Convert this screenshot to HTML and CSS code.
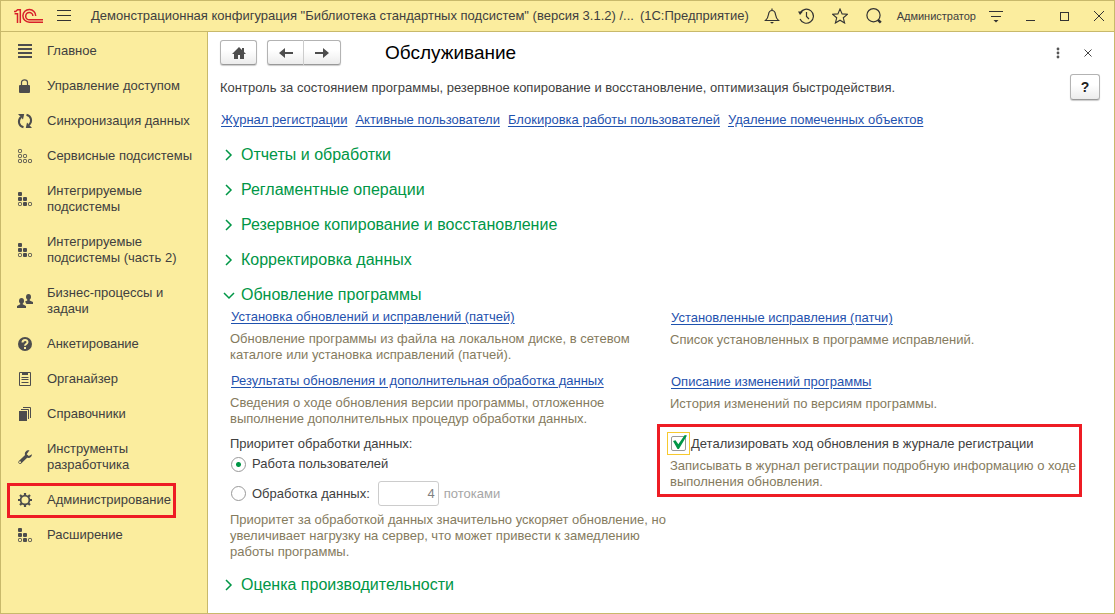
FILE: index.html
```html
<!DOCTYPE html>
<html lang="ru">
<head>
<meta charset="utf-8">
<title>Обслуживание</title>
<link rel="stylesheet" href="styles.css">
</head>
<body>
<svg class="sprite" aria-hidden="true">
  <symbol id="blocks" viewBox="0 0 16 16">
    <g fill="currentColor"><rect x="1" y="1" width="4" height="4" rx="1"/><rect x="1" y="6" width="4" height="4" rx="1"/><rect x="6" y="6" width="4" height="4" rx="1"/><rect x="6" y="11" width="4" height="4" rx="1"/></g>
    <g fill="none" stroke="currentColor"><rect x="1.5" y="11.5" width="3" height="3" rx=".8"/><rect x="11.5" y="11.5" width="3" height="3" rx=".8"/></g>
  </symbol>
</svg>
<div class="window">
  <header class="titlebar">
    <svg class="logo" viewBox="0 0 30 16" fill="none" stroke="#d8202a" stroke-width="1.5">
      <path d="M0 3.6H1.6L3.6 1.8H6.3V15M.6 5.800H3.500V15"/>
      <path d="M21.700 8A6.400 6.400 0 1 0 15.300 14.200H29"/>
      <path d="M18.900 8A3.600 3.600 0 1 0 15.300 11.700H29"/>
    </svg>
    <button class="bare" aria-label="Меню"><svg width="14" height="12" viewBox="0 0 14 12" fill="none" stroke="#333"><path d="M0 .5h14M0 5.5h14M0 10.5h14"/></svg></button>
    <div class="caption"><span class="config">Демонстрационная конфигурация "Библиотека стандартных подсистем" (версия 3.1.2) /...</span><span>(1С:Предприятие)</span></div>
    <div class="tools">
      <button class="bare" aria-label="Уведомления"><svg width="16" height="16" viewBox="0 0 16 16" fill="none" stroke="#333" stroke-width="1.2"><path d="M8 .5v2M1.500 12.500h13c-2-1.500-2.500-3-3-6C11.200 4 10 2.500 8 2.500S4.800 4 4.500 6.500c-.5 3-1 4.500-3 6z"/><path d="M6 14h4l-2 1.800z" fill="#333" stroke="none"/></svg></button>
      <button class="bare" aria-label="История"><svg width="16" height="16" viewBox="0 0 16 16" fill="none" stroke="#333" stroke-width="1.2"><path d="M2.200 5A7 7 0 1 1 2 11M8.500 4v4.500l2.500 2.500"/><path d="M0 3.500h5L2 7z" fill="#333" stroke="none"/></svg></button>
      <button class="bare" aria-label="Избранное"><svg width="16" height="16" viewBox="0 0 16 16" fill="none" stroke="#333" stroke-width="1.1"><path d="M8 1l2.100 4.900 5.200.4-4 3.500 1.300 5.200L8 12.200 3.400 15l1.300-5.200-4-3.500 5.200-.4z"/></svg></button>
      <button class="bare" aria-label="Поиск"><svg width="16" height="16" viewBox="0 0 16 16" fill="none" stroke="#333" stroke-width="1.2"><circle cx="7.5" cy="7.2" r="6.6"/><path d="M12 11.800l2.800 2.800" stroke-width="2.600"/></svg></button>
      <span class="user">Администратор</span>
      <button class="bare" aria-label="Настройки"><svg width="14" height="14" viewBox="0 0 14 14"><path d="M0 2.500h14M2 7.500h10" stroke="#333"/><path d="M4.500 11h5L7 13.500z" fill="#333"/></svg></button>
    </div>
    <div class="syskeys">
      <button class="bare" aria-label="Свернуть"><svg width="10" height="10" viewBox="0 0 10 10"><path d="M0 9.500h9" stroke="#333"/></svg></button>
      <button class="bare" aria-label="Развернуть"><svg width="10" height="10" viewBox="0 0 10 10" fill="none" stroke="#333"><rect x=".5" y="1.500" width="8" height="8"/></svg></button>
      <button class="bare" aria-label="Закрыть"><svg width="10" height="10" viewBox="0 0 10 10" stroke="#333"><path d="M0 0l10 10M10 0L0 10"/></svg></button>
    </div>
  </header>
  <div class="body">
    <nav class="sidebar">
      <a href="#"><svg viewBox="0 0 16 16" stroke="currentColor" stroke-width="2"><path d="M1 2h14M1 6h14M1 10h14M1 14h14"/></svg><span>Главное</span></a>
      <a href="#"><svg viewBox="0 0 16 16"><rect x="2" y="7" width="11" height="8" rx="1" fill="currentColor"/><path d="M4.500 7V4.500C4.500 1 10.500 1 10.500 4.500V7" fill="none" stroke="currentColor" stroke-width="1.2"/></svg><span>Управление доступом</span></a>
      <a href="#"><svg viewBox="0 0 16 16"><g fill="none" stroke="currentColor" stroke-width="2"><path d="M6.500 14.300C1.500 13 .5 7.500 4 4"/><path d="M9.500 1.700c5 1.300 6 6.800 2.500 10.300"/></g><path d="M1 1h6.200L6 6.500z M15 15H8.800L10 9.500z" fill="currentColor"/></svg><span>Синхронизация данных</span></a>
      <a href="#"><svg viewBox="0 0 16 16" fill="none" stroke="currentColor"><rect x="1.5" y="1.5" width="3" height="3" rx=".8"/><rect x="1.5" y="6.5" width="3" height="3" rx=".8"/><rect x="6.5" y="6.5" width="3" height="3" rx=".8"/><rect x="1.5" y="11.5" width="3" height="3" rx=".8"/><rect x="6.5" y="11.5" width="3" height="3" rx=".8"/><rect x="11.5" y="11.5" width="3" height="3" rx=".8"/></svg><span>Сервисные подсистемы</span></a>
      <a href="#"><svg><use href="#blocks"/></svg><span>Интегрируемые подсистемы</span></a>
      <a href="#"><svg><use href="#blocks"/></svg><span>Интегрируемые подсистемы (часть 2)</span></a>
      <a href="#"><svg viewBox="0 0 16 16" fill="currentColor"><ellipse cx="11.500" cy="3.800" rx="2.500" ry="2.900"/><path d="M10.300 6h2.400v1.500l3.300 1.500V11H9.500L8 8.500l2.300-1z"/><ellipse cx="4.500" cy="7.800" rx="2.500" ry="2.900"/><path d="M3.300 10h2.400v1.300L9 13v2H0v-2l3.300-1.700z"/></svg><span>Бизнес-процессы и задачи</span></a>
      <a href="#"><svg viewBox="0 0 16 16"><circle cx="8" cy="8" r="7" fill="currentColor"/><path d="M5.500 6.500C5.500 3.200 10.700 3.200 10.500 6.300 10.400 8 8 8 8 9.800M8 11v2" fill="none" stroke="#fbed9e" stroke-width="2"/></svg><span>Анкетирование</span></a>
      <a href="#"><svg viewBox="0 0 16 16" fill="none" stroke="currentColor"><path d="M5 1.500H2.500v13h11v-13H11M4.500 6.500h7M4.500 8.500h7M4.500 11.500h7"/><path d="M5 1h6v3H5z" fill="currentColor" stroke="none"/></svg><span>Органайзер</span></a>
      <a href="#"><svg viewBox="0 0 16 16"><path d="M2 5h8v10H2z" fill="currentColor"/><path d="M4 3.500h7.500V13M6 1.500h7.500V12" fill="none" stroke="currentColor"/></svg><span>Справочники</span></a>
      <a href="#"><svg viewBox="0 0 16 16"><path d="M3 13.200L9 7.500" stroke="currentColor" stroke-width="3.400" stroke-linecap="round"/><path d="M12.500 1.200C9.500.8 7.300 3 8 6c.8 3.500 6.500 4.500 7-.8L11.800 7 9.700 5.200z" fill="currentColor"/><circle cx="3" cy="13.200" r="1" fill="#fbed9e"/></svg><span>Инструменты разработчика</span></a>
      <a href="#" class="marked"><svg viewBox="0 0 16 16" fill="none" stroke="currentColor"><circle cx="8" cy="8" r="4.400" stroke-width="1.800"/><path d="M8 1v2.500M8 12.500V15M1 8h2.500M12.500 8H15M3 3l2 2M11 11l2 2M3 13l2-2M11 5l2-2" stroke-width="2.200"/></svg><span>Администрирование</span></a>
      <a href="#"><svg><use href="#blocks"/></svg><span>Расширение</span></a>
    </nav>
    <main class="page">
      <div class="toolbar">
        <button class="key" aria-label="Начальная страница"><svg width="16" height="14" viewBox="0 0 16 14" fill="#4d4d4d"><path d="M8 1L1 8h2v5h4V9h2v4h4V8h2l-2-2V2h-2v2z"/></svg></button>
        <div class="pair">
          <button class="key" aria-label="Назад"><svg width="14" height="10" viewBox="0 0 14 10" fill="#4d4d4d"><path d="M0 5l6-5v4h8v2H6v4z"/></svg></button>
          <button class="key" aria-label="Вперед"><svg width="14" height="10" viewBox="0 0 14 10" fill="#4d4d4d"><path d="M14 5L8 0v4H0v2h8v4z"/></svg></button>
        </div>
        <h1>Обслуживание</h1>
        <div class="corner">
          <button class="bare" aria-label="Еще"><svg width="4" height="12" viewBox="0 0 4 12" fill="#555"><circle cx="2" cy="2" r="1.4"/><circle cx="2" cy="6" r="1.4"/><circle cx="2" cy="10" r="1.4"/></svg></button>
          <button class="bare" aria-label="Закрыть страницу"><svg width="8" height="8" viewBox="0 0 8 8" stroke="#444"><path d="M.5 .5l7 7M7.500 .5l-7 7"/></svg></button>
        </div>
      </div>
      <div class="intro">
        <div>
          <p>Контроль за состоянием программы, резервное копирование и восстановление, оптимизация быстродействия.</p>
          <div class="links"><a href="#">Журнал регистрации</a><a href="#">Активные пользователи</a><a href="#">Блокировка работы пользователей</a><a href="#">Удаление помеченных объектов</a></div>
        </div>
        <button class="key help">?</button>
      </div>
      <div class="sections">
        <h2><svg class="arrow" viewBox="0 0 12 12"><path d="M3 1l5 5-5 5"/></svg>Отчеты и обработки</h2>
        <h2><svg class="arrow" viewBox="0 0 12 12"><path d="M3 1l5 5-5 5"/></svg>Регламентные операции</h2>
        <h2><svg class="arrow" viewBox="0 0 12 12"><path d="M3 1l5 5-5 5"/></svg>Резервное копирование и восстановление</h2>
        <h2><svg class="arrow" viewBox="0 0 12 12"><path d="M3 1l5 5-5 5"/></svg>Корректировка данных</h2>
        <section>
          <h2><svg class="arrow" viewBox="0 0 12 12"><path d="M1 4l5 5 5-5"/></svg>Обновление программы</h2>
          <div class="columns">
            <div class="left">
              <a href="#">Установка обновлений и исправлений (патчей)</a>
              <p class="note">Обновление программы из файла на локальном диске, в сетевом каталоге или установка исправлений (патчей).</p>
              <a href="#">Результаты обновления и дополнительная обработка данных</a>
              <p class="note">Сведения о ходе обновления версии программы, отложенное выполнение дополнительных процедур обработки данных.</p>
              <fieldset>
                <legend>Приоритет обработки данных:</legend>
                <label class="choice"><input type="radio" name="priority" checked>Работа пользователей</label>
                <div class="threads">
                  <label class="choice"><input type="radio" name="priority">Обработка данных:</label>
                  <input class="count" id="threads" type="text" value="4" disabled>
                  <label class="unit" for="threads">потоками</label>
                </div>
              </fieldset>
              <p class="note last">Приоритет за обработкой данных значительно ускоряет обновление, но увеличивает нагрузку на сервер, что может привести к замедлению работы программы.</p>
            </div>
            <div class="right">
              <a href="#">Установленные исправления (патчи)</a>
              <p class="note">Список установленных в программе исправлений.</p>
              <a href="#">Описание изменений программы</a>
              <p class="note">История изменений по версиям программы.</p>
              <div class="frame">
                <label class="detail"><span class="focus"><input type="checkbox" checked></span>Детализировать ход обновления в журнале регистрации</label>
                <p class="note">Записывать в журнал регистрации подробную информацию о ходе выполнения обновления.</p>
              </div>
            </div>
          </div>
        </section>
        <h2><svg class="arrow" viewBox="0 0 12 12"><path d="M3 1l5 5-5 5"/></svg>Оценка производительности</h2>
      </div>
    </main>
  </div>
</div>
</body>
</html>
```
FILE: styles.css
```css
* { box-sizing: border-box; }
body { margin: 0; font: 13px/16px "Liberation Sans", Arial, sans-serif; color: #404040; background: #fff; }
h1, h2, p { margin: 0; font-weight: normal; }
a { color: #1f52ae; text-underline-offset: 2px; }
button, input { font: inherit; }
svg { display: block; flex: none; }
.sprite { position: absolute; width: 0; height: 0; }

.window { display: flex; flex-direction: column; min-height: 100vh; border: 1px solid #c8b96b; }
.bare { display: flex; padding: 0; border: 0; background: none; }

.titlebar { display: flex; align-items: center; height: 31px; padding: 0 10px 0 13px; background: #fbed9e; border-bottom: 1px solid #c8b96b; }
.logo { width: 30px; height: 16px; margin-right: 13px; }
.caption { display: flex; flex: 1; gap: 6px; margin-left: 20px; white-space: nowrap; }
.tools { display: flex; align-items: center; gap: 18px; }
.user { font-size: 11px; margin: 0 -5px 0 -3px; }
.syskeys { display: flex; gap: 24px; margin-left: 23px; }

.body { display: flex; flex: 1; }
.sidebar { display: flex; flex: none; flex-direction: column; gap: 19px; width: 207px; padding: 11px 10px 0 16px; background: #fbed9e; border-right: 1px solid #c8b96b; }
.sidebar a { position: relative; display: flex; align-items: center; gap: 14px; color: #404040; text-decoration: none; }
.sidebar svg { width: 16px; height: 16px; color: #4d4d4d; }
.marked::after { content: ""; position: absolute; inset: -9px 21px -10px -10px; border: 3px solid #ee1c24; }

.page { flex: 1; min-width: 0; padding: 8px 14px 16px 12px; }
.toolbar { display: flex; align-items: center; }
.key { display: flex; align-items: center; justify-content: center; width: 37px; height: 25px; padding: 0; border: 1px solid #b3b3b3; border-bottom-color: #999; border-radius: 3px; background: linear-gradient(#fff 40%, #ececec); box-shadow: 0 1px 1px #ccc; }
.pair { display: flex; margin-left: 10px; }
.pair .key:first-child { border-radius: 3px 0 0 3px; border-right-color: #ccc; }
.pair .key:last-child { border-left: 0; border-radius: 0 3px 3px 0; }
h1 { margin-left: 44px; font-size: 19px; line-height: 24px; color: #000; }
.corner { display: flex; align-items: center; gap: 24px; margin-left: auto; padding-right: 8px; }
.intro { display: flex; justify-content: space-between; align-items: flex-start; padding-top: 9px; }
.intro p { padding-top: 6px; }
.links { display: flex; gap: 8px; margin: 16px 0 0 1px; white-space: nowrap; }
.help { width: 30px; height: 26px; font-size: 14px; font-weight: bold; color: #222; }

.sections { display: flex; flex-direction: column; gap: 15px; padding-top: 17px; }
h2 { display: flex; align-items: center; gap: 6px; margin-left: 3px; font-size: 16px; line-height: 20px; color: #009646; }
.arrow { width: 12px; height: 12px; fill: none; stroke: #009646; stroke-width: 1.5; }
.columns { display: grid; grid-template-columns: 1fr 1fr; gap: 10px; margin-left: 10px; padding-top: 4px; }
.columns > div > a { display: table; margin-left: 1px; }
.note { margin: 6px 0 10px; color: #857b5e; }
.last { margin: 6px -10px 0 0; }
fieldset { margin: -1px 0 0; padding: 0; border: 0; }
legend { padding: 0; }
.choice { display: flex; align-items: center; gap: 6px; }
.choice input { appearance: none; width: 15px; height: 15px; margin: 0 0 0 1px; border: 1px solid #999; border-radius: 50%; background: #fff; }
.choice input:checked { background: radial-gradient(circle, #009646 2px, #fff 3px); }
legend + .choice { padding-top: 4px; }
.threads { display: flex; align-items: center; gap: 5px; padding-top: 9px; }
.count { width: 61px; height: 25px; margin-left: 3px; padding: 0 3px; border: 1px solid #ccc; border-radius: 3px; background: #fff; color: #808080; text-align: right; }
.unit { color: #a6a6a6; }
.right { padding-top: 1px; }
.right > .note { margin-bottom: 26px; }
.right > .note:nth-of-type(2) { margin-bottom: 12px; }
.frame { margin: 0 18px 0 -13px; padding: 5px 0 4px 10px; border: 3px solid #ee1c24; }
.detail { display: flex; align-items: center; gap: 1px; margin-left: -3px; }
.focus { display: flex; padding: 3px; border: 1px solid #f7c92f; }
.focus input { position: relative; appearance: none; width: 15px; height: 15px; margin: 0; border: 1px solid #999; border-radius: 2px; background: #fff; }
.focus input:checked::after { content: ""; position: absolute; inset: -2px -2px 1px 1px; background: #009646; clip-path: polygon(0 42%, 18% 38%, 38% 66%, 84% 0, 100% 4%, 42% 100%, 32% 100%); }
.frame .note { margin: 3px 0 0; }
```
